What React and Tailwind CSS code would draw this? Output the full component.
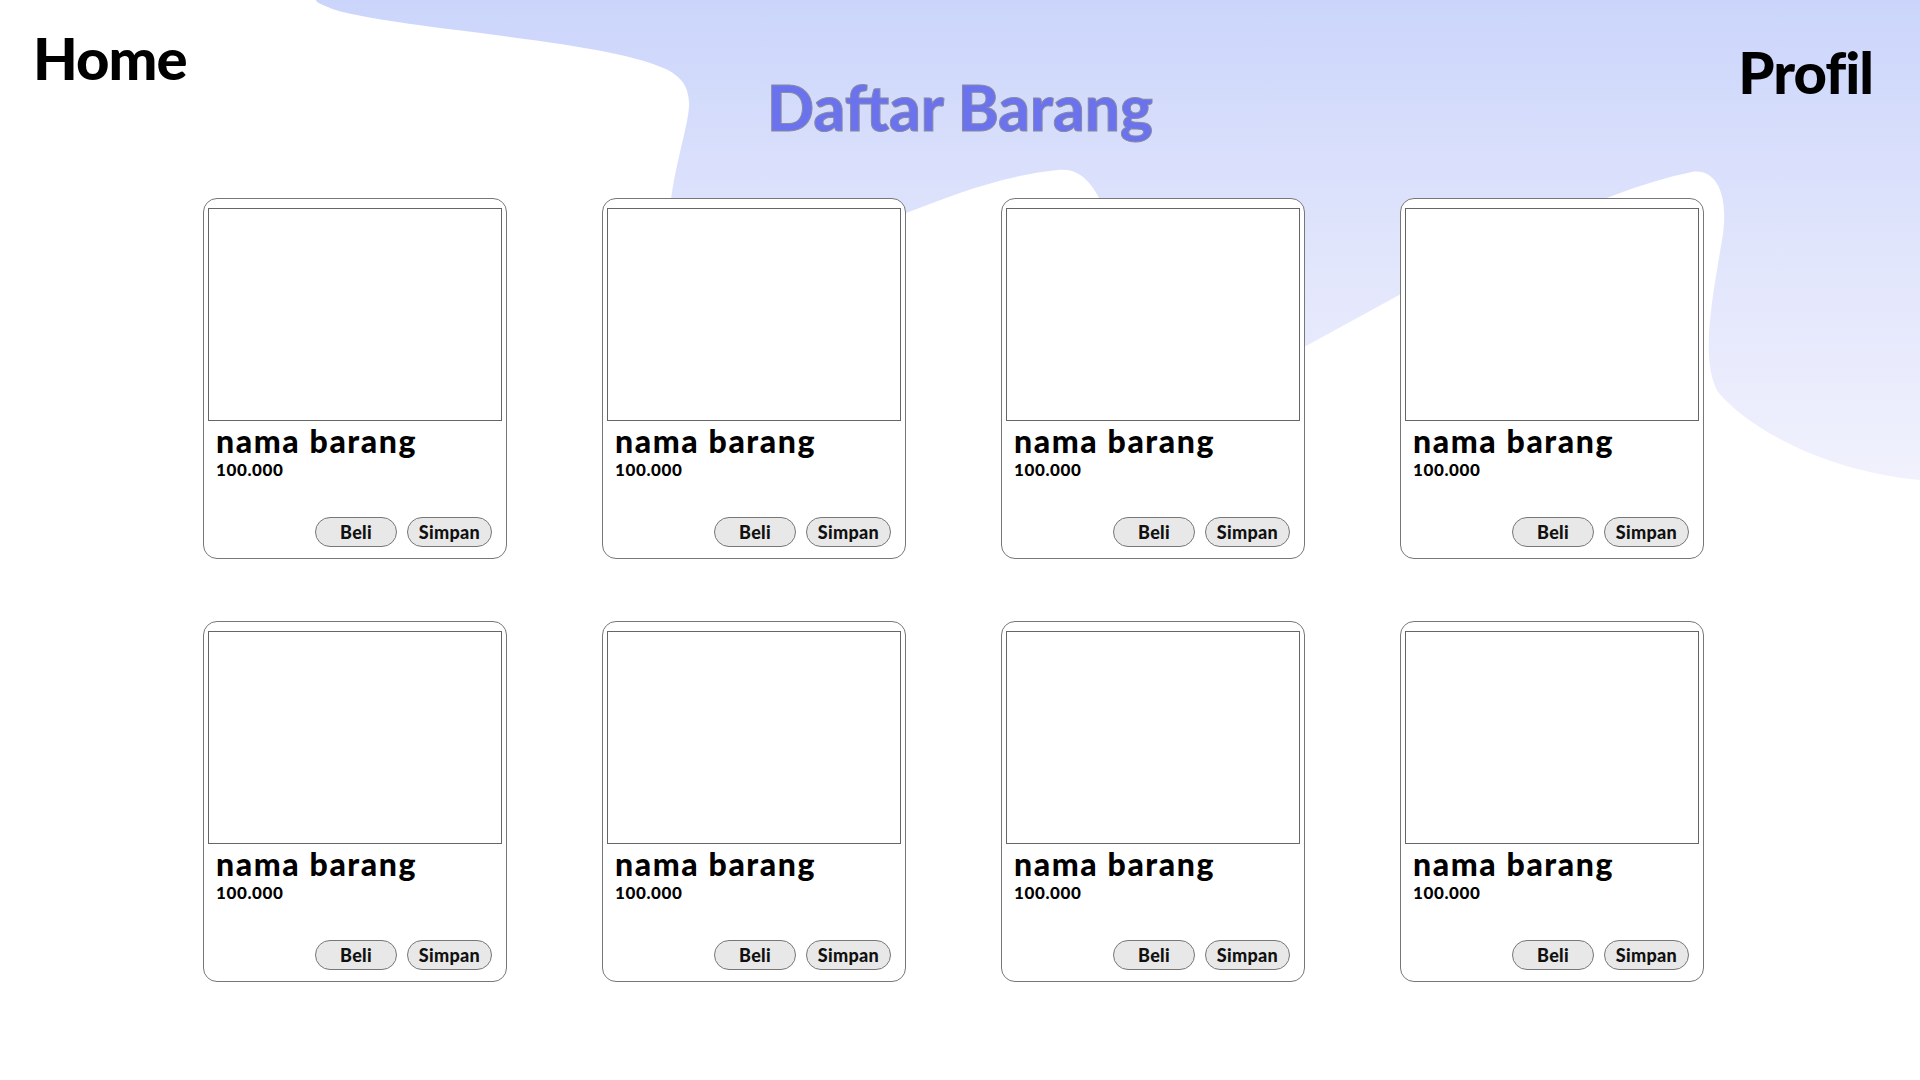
import React from "react";

const items = Array.from({ length: 8 }, (_, i) => ({
  id: i + 1,
  name: "nama barang",
  price: "100.000",
}));

const font = { fontFamily: "Lato, 'Open Sans', sans-serif" };

// blob ungu muda di belakang
const Background = () => (
  <svg
    className="absolute inset-0 w-[1920px] h-[1080px]"
    viewBox="0 0 1920 1080"
    aria-hidden="true"
  >
    <defs>
      <linearGradient id="blob" x1="0" y1="0" x2="0" y2="1">
        <stop offset="0%" stopColor="#cbd5fb" />
        <stop offset="55%" stopColor="#e2e6fc" />
        <stop offset="100%" stopColor="#f1f1fd" />
      </linearGradient>
    </defs>
    <path
      fill="url(#blob)"
      d="M316 0 L1920 0 L1920 480
         C1830 472 1752 432 1718 392
         C1700 360 1712 300 1722 240
         C1730 195 1716 168 1692 172
         C1610 188 1480 252 1401 294
         L1306 346 L1105 210
         C1092 180 1078 168 1058 170
         C1000 176 950 196 906 213
         L720 330 L671 200
         C676 160 690 120 689 102
         C688 86 682 78 668 70
         C630 52 560 43 440 28
         C380 20 345 14 330 8
         C320 4 316 2 316 0 Z"
    />
  </svg>
);

const Card = ({ item }) => (
  <div className="w-[304px] h-[361px] bg-white border border-[#777] rounded-[14px] pt-[9px] px-[4px] flex flex-col">
    <div className="h-[213px] w-full border border-[#666] bg-white" />
    <div className="pl-[8px]">
      <p className="text-[32px] font-black tracking-[1.6px] leading-[39px] text-black">{item.name}</p>
      <p className="text-[17px] font-black tracking-[0.6px] leading-[20px] text-black">{item.price}</p>
    </div>
    <div className="mt-auto flex justify-end gap-[10px] pr-[10px] pb-[11px]">
      <button className="w-[82px] h-[30px] rounded-full border border-[#777] bg-[#e8e8e8] text-[18px] font-black tracking-[0.3px] text-[#111]">
        Beli
      </button>
      <button className="w-[85px] h-[30px] rounded-full border border-[#777] bg-[#e8e8e8] text-[18px] font-black tracking-[0.3px] text-[#111]">
        Simpan
      </button>
    </div>
  </div>
);

export default function App() {
  return (
    <div className="relative w-[1920px] h-[1080px] overflow-hidden bg-white" style={font}>
      <Background />
      <div className="relative">
        {/* HEADER */}
        <header className="grid grid-cols-[1fr_auto_1fr] items-start h-[198px]">
          <a className="pl-[33px] pt-[29px] text-[58px] font-black tracking-[-1px] leading-none text-black">Home</a>
          <h1 className="pt-[76px] text-[62px] font-black leading-none text-[#6a72ee] [-webkit-text-stroke:1px_#8a8aa0]">
            Daftar Barang
          </h1>
          <a className="justify-self-end pr-[47px] pt-[43px] text-[58px] font-black tracking-[-1px] leading-none text-black">Profil</a>
        </header>

        {/* DAFTAR */}
        <main className="pl-[203px] grid grid-cols-[repeat(4,304px)] gap-x-[95px] gap-y-[62px]">
          {items.map((it) => (
            <Card key={it.id} item={it} />
          ))}
        </main>
      </div>
    </div>
  );
}
